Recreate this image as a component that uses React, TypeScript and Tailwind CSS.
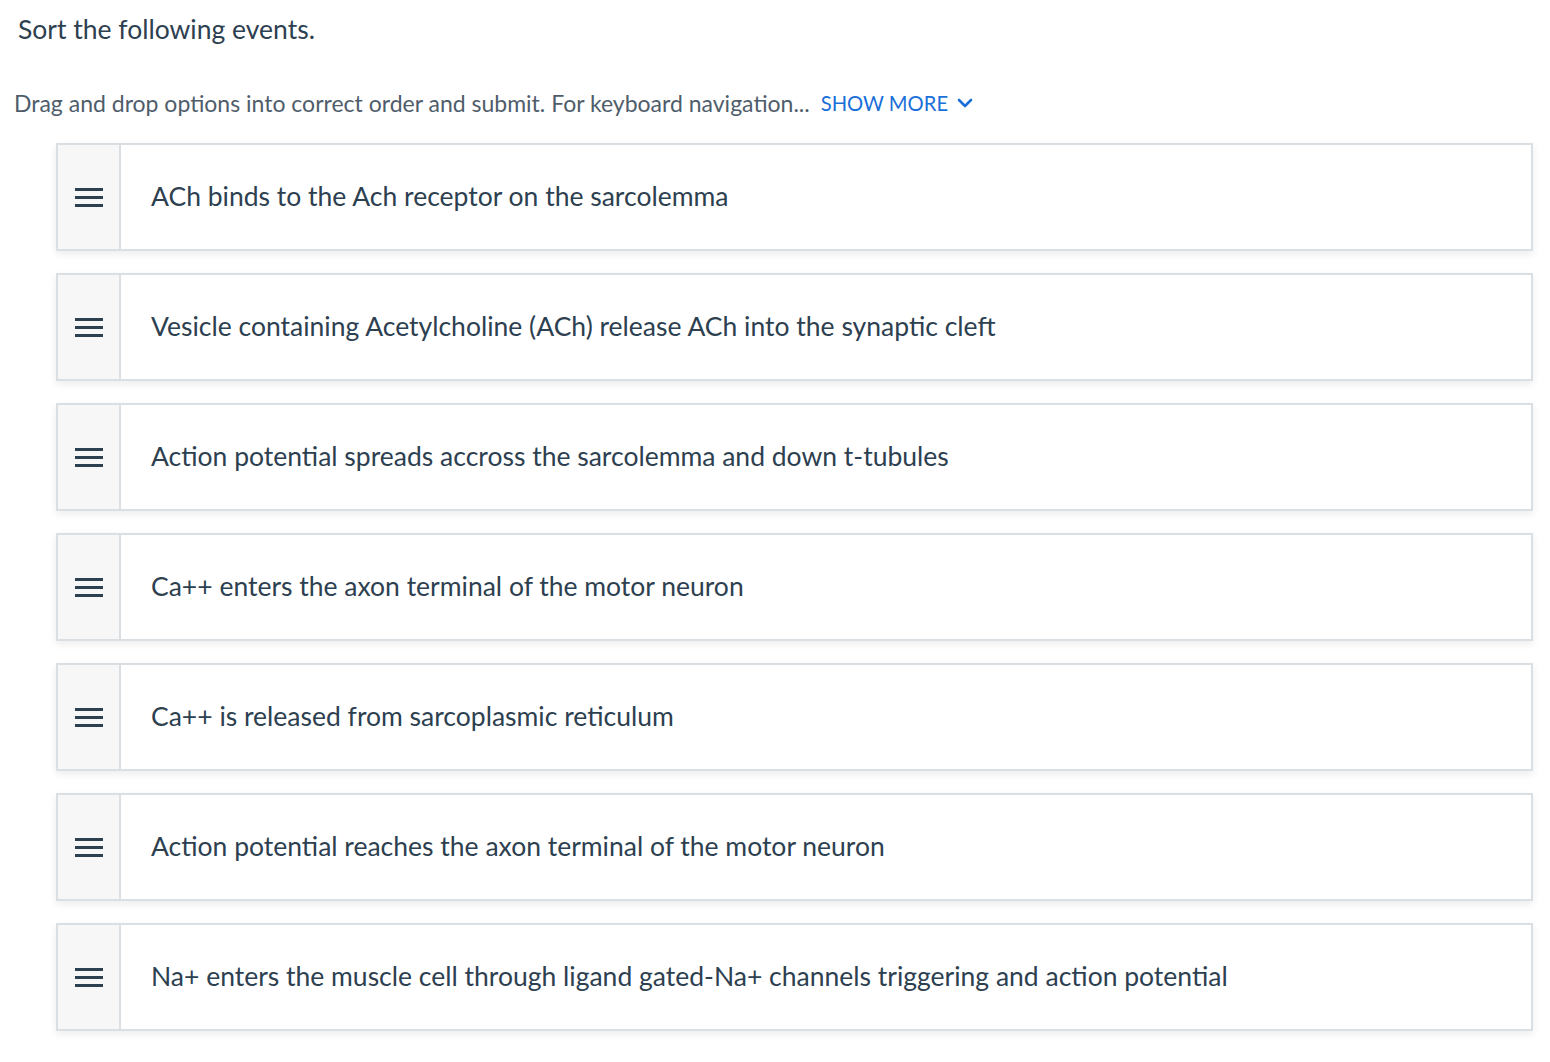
import React from 'react'

const items = [
  'ACh binds to the Ach receptor on the sarcolemma',
  'Vesicle containing Acetylcholine (ACh) release ACh into the synaptic cleft',
  'Action potential spreads accross the sarcolemma and down t-tubules',
  'Ca++ enters the axon terminal of the motor neuron',
  'Ca++ is released from sarcoplasmic reticulum',
  'Action potential reaches the axon terminal of the motor neuron',
  'Na+ enters the muscle cell through ligand gated-Na+ channels triggering and action potential',
]

const Handle = () => (
  <svg width="28" height="19" viewBox="0 0 28 19" className="text-[#2d4050]">
    <rect x="0" y="0" width="28" height="3" fill="currentColor" />
    <rect x="0" y="8" width="28" height="3" fill="currentColor" />
    <rect x="0" y="16" width="28" height="3" fill="currentColor" />
  </svg>
)

export default function App() {
  return (
    <div className="min-h-screen bg-white font-['Lato',sans-serif] text-[#2d4050]">
      <h1 className="pl-[18px] pt-[13px] text-[26.5px] leading-[32px]">Sort the following events.</h1>

      <div className="mt-[44px] flex items-center pl-[14px] text-[23px] leading-[28px] text-[#4f5d6b]">
        <span>Drag and drop options into correct order and submit. For keyboard navigation.&#8203;.&#8203;.</span>
        <button className="ml-[11px] flex items-center gap-[9px] text-[20.2px] text-[#1a6fd8]">
          SHOW MORE
          <svg width="16" height="10" viewBox="0 0 16 10">
            <path d="M2 2l6 6 6-6" fill="none" stroke="currentColor" strokeWidth="2.6" strokeLinecap="round" strokeLinejoin="round" />
          </svg>
        </button>
      </div>

      <div className="mt-[26px] flex flex-col gap-[22px] pl-[56px] pr-[17px]">
        {items.map((text, i) => (
          <div
            key={i}
            className="flex h-[108px] border-2 border-[#dadfe4] bg-white shadow-[0_3px_8px_rgba(0,0,0,0.08)]"
          >
            <div className="flex w-[63px] shrink-0 items-center justify-center border-r-2 border-[#dadfe4] bg-[#f7f7f7]">
              <Handle />
            </div>
            <div className="flex items-center pl-[30px] text-[26.5px]">{text}</div>
          </div>
        ))}
      </div>
    </div>
  )
}
